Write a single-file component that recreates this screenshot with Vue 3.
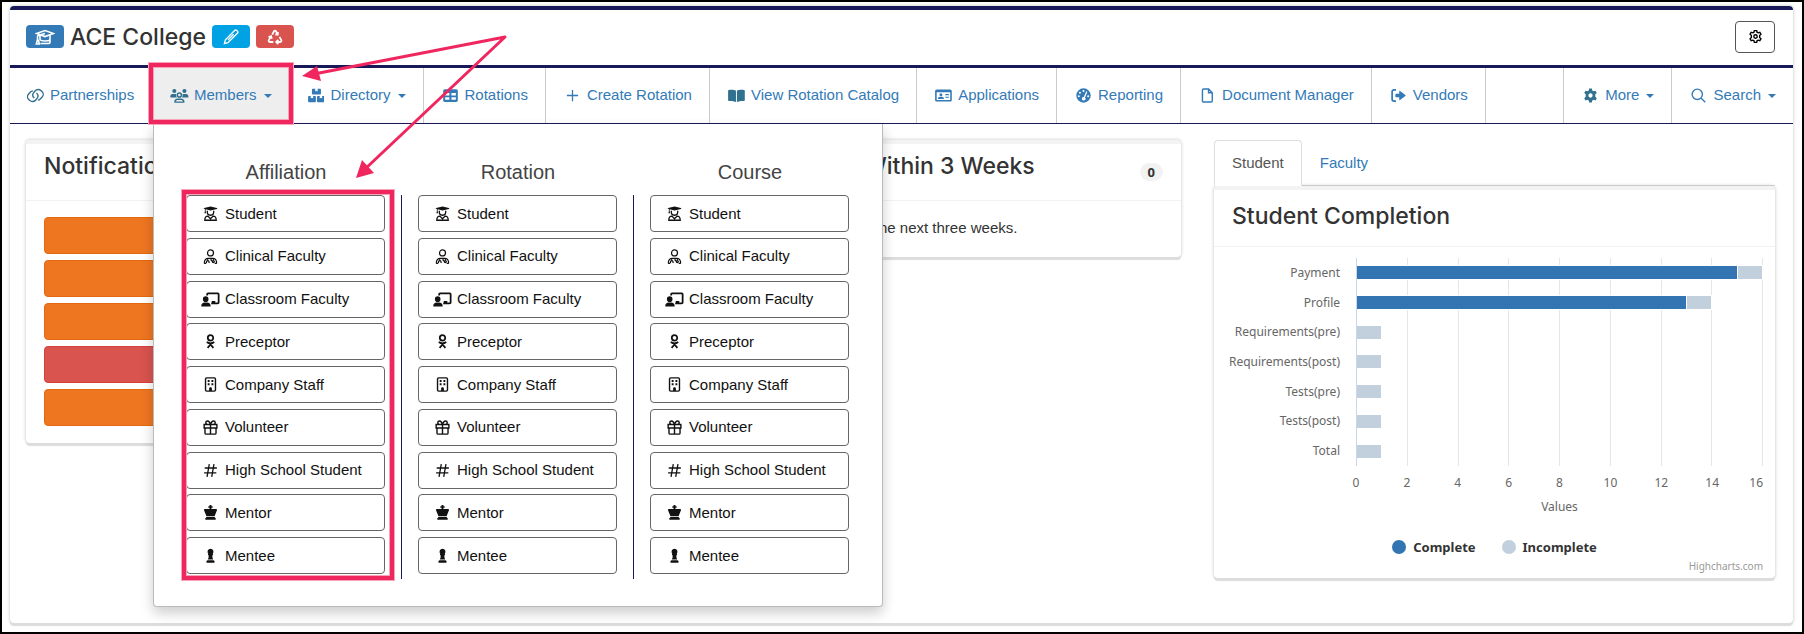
<script setup>
const navItems = [
  { label: 'Partnerships', icon: 'link', teal: true },
  { label: 'Members', icon: 'users', teal: true, caret: true, open: true },
  { label: 'Directory', icon: 'boxes', caret: true },
  { label: 'Rotations', icon: 'table' },
  { label: 'Create Rotation', icon: 'plus' },
  { label: 'View Rotation Catalog', icon: 'book', teal: true },
  { label: 'Applications', icon: 'idcard' },
  { label: 'Reporting', icon: 'gauge' },
  { label: 'Document Manager', icon: 'file' },
  { label: 'Vendors', icon: 'exit' }
]
const navRight = [
  { label: 'More', icon: 'gear', teal: true, caret: true },
  { label: 'Search', icon: 'search', caret: true }
]
const groups = ['Affiliation', 'Rotation', 'Course']
const roles = [
  { label: 'Student', icon: 'student' },
  { label: 'Clinical Faculty', icon: 'doctor' },
  { label: 'Classroom Faculty', icon: 'teacher' },
  { label: 'Preceptor', icon: 'person' },
  { label: 'Company Staff', icon: 'building' },
  { label: 'Volunteer', icon: 'gift' },
  { label: 'High School Student', icon: 'hash' },
  { label: 'Mentor', icon: 'king' },
  { label: 'Mentee', icon: 'pawn' }
]
const notices = ['warn', 'warn', 'warn', 'danger', 'warn']
const max = 16
const ticks = [0, 2, 4, 6, 8, 10, 12, 14, 16]
const rows = [
  { label: 'Payment', done: 15, open: 1 },
  { label: 'Profile', done: 13, open: 1 },
  { label: 'Requirements(pre)', done: 0, open: 1 },
  { label: 'Requirements(post)', done: 0, open: 1 },
  { label: 'Tests(pre)', done: 0, open: 1 },
  { label: 'Tests(post)', done: 0, open: 1 },
  { label: 'Total', done: 0, open: 1 }
]
const pct = (n) => ({ width: (n / max) * 100 + '%' })

const gearSolid =
  'M6.6 0.6h2.8l.5 2.1 1.3.8 2.1-.7 1.4 2.4-1.6 1.5v2.6l1.6 1.5-1.4 2.4-2.1-.7-1.3.8-.5 2.1H6.6l-.5-2.1-1.3-.8-2.1.7-1.4-2.4 1.6-1.5V6.7L1.3 5.2l1.4-2.4 2.1.7 1.3-.8z'

// s: stroked path, w: stroke width, f: filled path (even-odd), vb: view box width
const icons = {
  link: { vb: 20, w: 1.5, s: 'M8.900 10.600a3.600 3.600 0 0 1-.9-5.400l1.900-2.200a4.200 4.200 0 0 1 6.100-.2l1.100 1a4.200 4.200 0 0 1 .1 5.900l-2 2c-.7.7-1.600 1.100-2.600 1.200M11.100 5.400a3.600 3.600 0 0 1 .9 5.400L10.100 13a4.200 4.200 0 0 1-6.100.2l-1.100-1a4.200 4.200 0 0 1-.1-5.900l2-2c.7-.7 1.600-1.100 2.600-1.200' },
  users: { vb: 20, f: 'M4.600 1a2.200 2.200 0 1 1 0 4.400 2.200 2.200 0 0 1 0-4.400zM15.400 1a2.200 2.200 0 1 1 0 4.400 2.200 2.200 0 0 1 0-4.400zM2.800 6.400h2.600c.4 0 .8.1 1.100.3a4 4 0 0 0 .8 3.300H.7C.3 10 .3 9.700.3 9.300 .3 7.700 1.300 6.400 2.800 6.400zM14.600 6.400h2.600c1.500 0 2.500 1.300 2.500 2.900 0 .4 0 .7-.4.7h-6.600a4 4 0 0 0 .8-3.300c.3-.2.7-.3 1.100-.3zM10 4.400a3 3 0 1 1 0 6 3 3 0 0 1 0-6zm0 1.600a1.400 1.400 0 1 0 0 2.800A1.400 1.400 0 0 0 10 6zM8.300 11.300h3.400c2.300 0 3.800 1.600 3.800 3.700 0 .4-.2.7-.6.700H5.100c-.4 0-.6-.3-.6-.7 0-2.100 1.500-3.700 3.800-3.700zm0 1.400c-1.200 0-2 .7-2.300 1.600h8c-.3-.9-1.100-1.600-2.300-1.600z' },
  boxes: { vb: 18, f: 'M5 .8h2.700v2.800l1.300-.7 1.300.7V.8H13c.5 0 .8.3.8.8v4.600c0 .5-.3.8-.8.8H5c-.5 0-.8-.3-.8-.8V1.600c0-.5.300-.8.800-.8zM1 8.500h1.900v2.600l1.300-.7 1.300.7V8.500h2c.5 0 .9.300.9.800v5c0 .5-.4.900-.9.900H1c-.5 0-.900-.4-.900-.9v-5c0-.5.4-.8.9-.8zM10.500 8.500h2v2.600l1.300-.7 1.300.7V8.500H17c.5 0 .9.300.9.800v5c0 .5-.4.900-.9.900h-6.500c-.5 0-.9-.4-.9-.9v-5c0-.5.4-.8.9-.8z' },
  table: { f: 'M2 1.200h12c1 0 1.800.8 1.800 1.800v10c0 1-.8 1.800-1.800 1.800H2c-1 0-1.800-.8-1.800-1.800V3c0-1 .8-1.800 1.800-1.800zM2.300 5.400v2.500h4.500V5.400zM9 5.400v2.500h4.700V5.400zM2.300 9.900v2.600h4.500V9.900zM9 9.900v2.600h4.700V9.900z' },
  plus: { w: 1.4, s: 'M8 2v12M2 8h12' },
  book: { vb: 18, f: 'M8.500 3v12C6.500 13.900 3.500 13.600 1 13.800c-.5 0-.9-.3-.9-.8V2.800C.1 2.400.4 2 .9 2 3.800 1.600 6.900 1.900 8.500 3zM9.500 3c1.600-1.100 4.700-1.400 7.600-1 .5 0 .8.400.8.800V13c0 .5-.4.800-.9.800-2.500-.2-5.500.1-7.500 1.200z' },
  idcard: { vb: 18, f: 'M2 1.500h14c1.100 0 1.900.8 1.900 1.800v9.400c0 1-.8 1.800-1.900 1.800H2c-1.100 0-1.900-.8-1.900-1.800V3.300c0-1 .8-1.800 1.900-1.800zM1.800 4.600v8.200h14.400V4.600zM6.300 5.600a1.600 1.600 0 1 1 0 3.200 1.600 1.600 0 0 1 0-3.200zM5.400 9.400h1.800c1.400 0 2.300.9 2.300 2.300H3.100c0-1.400.9-2.300 2.300-2.300zM11 6.500h3.800v1.200H11zM11 9.300h3.800v1.200H11z' },
  gauge: { f: 'M8 .3a7.700 7.700 0 1 1 0 15.400A7.700 7.700 0 0 1 8 .3zM8 2.100a1.100 1.100 0 1 0 0 2.200 1.100 1.100 0 0 0 0-2.200zM4.200 3.900a1.100 1.100 0 1 0 0 2.200 1.100 1.100 0 0 0 0-2.200zM3 7.600a1.100 1.100 0 1 0 0 2.200 1.100 1.100 0 0 0 0-2.200zM13 7.600a1.100 1.100 0 1 0 0 2.200 1.100 1.100 0 0 0 0-2.200zM10.600 4.200 8.300 9.500a1.900 1.900 0 1 0 1.300.6l2.300-5.300c.3-.9-.9-1.400-1.300-.6z' },
  file: { w: 1.5, s: 'M3.900 1.100h5.300l3.900 3.900v8.600c0 .8-.5 1.300-1.300 1.300H3.900c-.8 0-1.300-.5-1.300-1.300V2.400c0-.8.500-1.300 1.300-1.300zM9.100 1.300V5h3.800' },
  exit: { w: 1.8, s: 'M5.300 2H3.200C2 2 1.200 2.800 1.200 4v8c0 1.200.8 2 2 2h2.100', f: 'M9.600 3.200 15.300 7.400c.4.300.4.900 0 1.200L9.600 12.900c-.4.200-.8 0-.8-.5V9.900H5.500c-.5 0-.8-.3-.8-.8V7c0-.5.3-.8.800-.8h3.300V3.600c0-.5.400-.7.800-.4z' },
  gear: { f: gearSolid + 'M8 5.700a2.300 2.300 0 1 0 0 4.600 2.300 2.300 0 0 0 0-4.600z' },
  search: { w: 1.5, s: 'M6.700 1.200a5.500 5.500 0 1 1 0 11 5.500 5.500 0 0 1 0-11zM10.700 10.700l4.500 4.500' },
  cog: { w: 1.700, s: gearSolid + 'M8 5.900a2.100 2.100 0 1 0 0 4.200 2.100 2.100 0 0 0 0-4.200z' },
  cap: { vb: 20, w: 1.6, s: 'M1.500 4.500 10 1.500l8.500 3L10 7.600zM5 6.200V10c0 1 2 2 5 2s5-1 5-2V6.200M10 4.600l-6.800 1.900c-.6.300-.7.800-.7 1.500v2.800l-1.200 4.200h3l-1-4.200M5.500 14.500h8.500c1 0 1-.8 1-1.500v-3' },
  pencil: { w: 1.3, s: 'M11.600 1.500c.7-.7 1.500-.7 2.200 0l.6.600c.7.700.7 1.500 0 2.200L5 13.600l-3.600 1 1-3.700zM10.600 5.300 5 11' },
  recycle: { w: 1.800, s: 'M5.200 5.600 7 2.300c.4-.8 1.600-.8 2 0l1.500 2.600M8.200 5.300l2.500.4.500-2.600M12.500 7.900l1.800 3.200c.4.900-.1 1.900-1.200 1.900H9.600M11.300 10.800 9.200 13l2.100 2.200M6.300 13H2.900c-1 0-1.600-1-1.100-1.900l2.100-3.500M1.500 8l2.600-.8.700 2.600' },
  student: { w: 1.400, s: 'M4.600 5v1.500a3.400 3.400 0 0 0 6.800 0V5M1.900 15.200c0-2.600 1.200-4.400 3.300-4.400L8 13.600l2.800-2.800c2.100 0 3.300 1.800 3.300 4.400zM8 13v2', f: 'M8 .4 14.800 2c.6.200.6.900 0 1.100L8 4.700 2.800 3.500v2l.6 2.300H1.500L2 5.400V3.200L1.200 3c-.6-.2-.6-.8 0-1z' },
  doctor: { w: 1.300, s: 'M8 1a3.200 3.200 0 1 1 0 6.400A3.200 3.200 0 0 1 8 1zM1.400 15.300c0-3.300 1.700-5.300 4.300-5.300h4.600c2.600 0 4.300 2 4.300 5.300M5 10.200v2.300M3.700 15v-1c0-1 .6-1.500 1.400-1.500s1.400.5 1.400 1.500v1M11 10.200v2M8.300 10l.7 3M11 12.300a1.100 1.100 0 1 1 0 2.200 1.100 1.100 0 0 1 0-2.200M1.200 15.300h2.300M12.500 15.300h2.200' },
  teacher: { vb: 20, w: 1.900, s: 'M6.600 3.600V2.400c0-.5.3-.9.9-.9h10.400c.6 0 .9.400.9.900v8.800c0 .5-.3.900-.9.900h-7', f: 'M5 4.600a3 3 0 1 1 0 6 3 3 0 0 1 0-6zM4 11.300h2.600c2.200 0 3.700 1.500 3.700 3.600 0 .4-.3.600-.6.600H.9c-.4 0-.6-.2-.6-.6 0-2.100 1.500-3.600 3.700-3.600zM11.500 9.700h3.700v2.400h-3.700z' },
  person: { w: 1.900, s: 'M8 1.200a2.900 2.900 0 1 1 0 5.800 2.900 2.900 0 0 1 0-5.800zM4 8.500c2.400 1.700 5.600 1.700 8 0M4.900 14.800 8 11.200l3.100 3.600M8 10v1.500' },
  building: { w: 1.500, s: 'M4 .9h8c.8 0 1.300.5 1.300 1.200v11.800c0 .7-.5 1.200-1.300 1.200H4c-.8 0-1.300-.5-1.300-1.200V2.100c0-.7.5-1.200 1.300-1.200z', f: 'M5 3.200h2v2H5zM9 3.200h2v2H9zM5 6.700h2v2H5zM9 6.700h2v2H9zM6.500 15v-2.500c0-2 3-2 3 0V15z' },
  gift: { w: 1.500, s: 'M1.200 4.800h13.600v3.700H1.200zM2.100 8.500v5.300c0 .7.500 1.300 1.300 1.300h9.200c.8 0 1.300-.6 1.300-1.300V8.500M8 4.800v10M8 4.600C7.300 2.400 6.300 1 4.900 1c-2.500 0-2.700 3.600 0 3.700M8 4.600C8.700 2.400 9.700 1 11.100 1c2.500 0 2.700 3.600 0 3.700' },
  hash: { w: 1.400, s: 'M6.700 1.200 4.300 14.800M11.700 1.200 9.300 14.800M1.800 5.300h13M1.200 10.500h13' },
  king: { f: 'M7 0h2v1.200h1.300V3H9v1.200h5c.8 0 1.200.7.9 1.400L12.300 12H3.700L1.100 5.600C.8 4.900 1.200 4.200 2 4.200h5V3H5.700V1.200H7zM3.700 12.700h8.600l1.300 1.700c.4.600 0 1.300-.7 1.300H3.100c-.7 0-1.100-.7-.7-1.300z' },
  pawn: { f: 'M8 .8a3.200 3.200 0 0 1 2.300 5.400h.4v1.500h-.8c0 1.700.2 3.100.9 4.600H5.200c.7-1.500.9-2.900.9-4.600h-.8V6.200h.4A3.200 3.200 0 0 1 8 .8zM4.600 13h6.800l1 1.400c.3.600 0 1.200-.7 1.200H4.300c-.7 0-1-.6-.7-1.200z' }
}
const Icon = (props) => {
  const i = icons[props.name]
  return h('svg', { class: 'icon', viewBox: `0 0 ${i.vb || 16} 16`, 'aria-hidden': 'true' }, [
    i.f && h('path', { d: i.f, fill: 'currentColor', 'fill-rule': 'evenodd' }),
    i.s && h('path', { d: i.s, fill: 'none', stroke: 'currentColor', 'stroke-width': i.w })
  ])
}
Icon.props = ['name']
</script>

<script>
import { h } from 'vue'
</script>

<template>
  <div class="page">
    <main class="panel">
      <header class="head">
        <span class="badge blue"><Icon name="cap" /></span>
        <h1>ACE College</h1>
        <button class="badge sky" aria-label="Edit"><Icon name="pencil" /></button>
        <button class="badge red" aria-label="Recycle"><Icon name="recycle" /></button>
        <button class="settings" aria-label="Settings"><Icon name="cog" /></button>
      </header>

      <nav class="nav">
        <ul class="left">
          <li v-for="n in navItems" :key="n.label" :class="{ open: n.open }">
            <a href="#" :class="{ teal: n.teal }">
              <span class="ico"><Icon :name="n.icon" /></span>{{ n.label }}<i v-if="n.caret" class="caret"></i>
            </a>
            <div v-if="n.open" class="menu">
              <section v-for="g in groups" :key="g">
                <h2>{{ g }}</h2>
                <div class="roles">
                  <button v-for="r in roles" :key="r.label">
                    <span class="ico"><Icon :name="r.icon" /></span>{{ r.label }}
                  </button>
                </div>
              </section>
            </div>
          </li>
        </ul>
        <ul class="right">
          <li v-for="n in navRight" :key="n.label">
            <a href="#" :class="{ teal: n.teal }">
              <span class="ico"><Icon :name="n.icon" /></span>{{ n.label }}<i class="caret"></i>
            </a>
          </li>
        </ul>
      </nav>

      <div class="columns">
        <section class="card">
          <div class="card-head"><h3>Notifications</h3></div>
          <div class="notices">
            <button v-for="(n, i) in notices" :key="i" :class="n" :aria-label="'Notification ' + (i + 1)"></button>
          </div>
        </section>

        <section class="card">
          <div class="card-head">
            <h3>Rotations Beginning Within 3 Weeks</h3>
            <span class="count">0</span>
          </div>
          <p>There are no rotations beginning in the next three weeks.</p>
        </section>

        <div class="stats">
          <div class="tabs" role="tablist">
            <a href="#" class="tab active" role="tab">Student</a>
            <a href="#" class="tab" role="tab">Faculty</a>
          </div>
          <section class="card">
            <div class="card-head"><h3>Student Completion</h3></div>
            <div class="chart">
              <div class="labels">
                <span v-for="r in rows" :key="r.label">{{ r.label }}</span>
              </div>
              <div class="plot">
                <div class="grid"><i v-for="n in 8" :key="n"></i></div>
                <div class="bars">
                  <div v-for="r in rows" :key="r.label" class="row">
                    <b v-if="r.done" class="done" :style="pct(r.done)"></b>
                    <b class="todo" :style="pct(r.open)"></b>
                  </div>
                </div>
              </div>
              <div class="ticks"><span v-for="t in ticks" :key="t">{{ t }}</span></div>
              <div class="axis">Values</div>
            </div>
            <div class="legend">
              <span><i class="done"></i>Complete</span>
              <span><i class="todo"></i>Incomplete</span>
            </div>
            <a href="#" class="credit">Highcharts.com</a>
          </section>
        </div>
      </div>
    </main>

    <svg class="marks" width="600" height="600" viewBox="0 0 600 600" aria-hidden="true">
      <g fill="none" stroke="#f7a3ba" stroke-width="6">
        <rect x="151" y="65" width="140" height="57" />
        <rect x="184" y="192" width="208" height="386" />
      </g>
      <g fill="none" stroke="#f0265f" stroke-width="4">
        <rect x="151" y="65" width="140" height="57" />
        <rect x="184" y="192" width="208" height="386" />
      </g>
      <path d="M314 74 505 37 364 170" fill="none" stroke="#f0265f" stroke-width="3" stroke-linejoin="round" />
      <path d="M302 76 317 66 321 81zM356 178 362 160 374 173z" fill="#f0265f" />
    </svg>
  </div>
</template>

<style>
body {
  margin: 0;
}
</style>

<style scoped>
* {
  box-sizing: border-box;
}
.page {
  position: relative;
  display: flex;
  min-height: 100vh;
  border: 2px solid #000;
  background: #fff;
  color: #333;
  font: 15px/22px "Liberation Sans", Arial, sans-serif;
}
h1, h2, h3, p, ul {
  margin: 0;
  padding: 0;
  font-weight: 400;
}
ul {
  display: flex;
  list-style: none;
}
a {
  color: #337ab7;
  text-decoration: none;
}
button {
  margin: 0;
  font: inherit;
  cursor: pointer;
}
:deep(.icon) {
  display: block;
  height: 16px;
}
.panel {
  flex: 1;
  min-width: 0;
  margin: 4px 9px 9px 8px;
  border-top: 4px solid #191959;
  border-radius: 4px;
  box-shadow: 0 3px 1px #dcdcdc, 0 0 3px 1px rgba(0, 0, 0, 0.14);
}
.head {
  display: flex;
  align-items: center;
  gap: 6px;
  height: 58px;
  padding: 0 18px 2px 16px;
  border-bottom: 3px solid #191959;
}
h1, h3 {
  font-family: Inter, "Open Sans", sans-serif;
  font-weight: 500;
  font-size: 23px;
  line-height: 32px;
  white-space: nowrap;
}
.badge {
  display: flex;
  align-items: center;
  justify-content: center;
  width: 38px;
  height: 23px;
  padding: 0;
  border: 0;
  border-radius: 4px;
  color: #fff;
}
.blue { background: #337ab7; }
.sky { background: #00a2e4; }
.red { background: #d9534f; }
.settings {
  display: flex;
  align-items: center;
  justify-content: center;
  width: 40px;
  height: 32px;
  margin-left: auto;
  border: 1px solid #555;
  border-radius: 4px;
  background: #fff;
  color: #000;
}
.settings :deep(.icon) {
  height: 13px;
}
.nav {
  display: flex;
  justify-content: space-between;
  height: 56px;
  border-bottom: 1px solid #191959;
}
.nav li {
  position: relative;
  border-right: 1px solid #ccc;
}
.nav .right li {
  border-right: 0;
  border-left: 1px solid #ccc;
}
.nav li > a {
  display: flex;
  align-items: center;
  height: 54px;
  padding: 0 17px;
  white-space: nowrap;
}
.nav .left li:first-child {
  min-width: 143px;
}
.nav .left li:first-child > a {
  padding: 0 16px;
}
.nav .open {
  background: #eee;
}
.ico {
  display: flex;
  justify-content: center;
  width: 19px;
  margin-right: 5px;
}
.nav .ico :deep(.icon) {
  flex: none;
  height: 15px;
}
.teal .ico {
  color: #31708f;
}
.caret {
  margin: 2px 0 0 7px;
  border: 4px solid transparent;
  border-top-color: currentColor;
  border-bottom: 0;
}
.menu {
  position: absolute;
  z-index: 2;
  top: calc(100% + 1px);
  left: 0;
  display: flex;
  padding: 27px 16px;
  border: 1px solid #bbb;
  border-top: 0;
  border-radius: 0 0 4px 4px;
  background: #fff;
  box-shadow: 0 6px 13px rgba(0, 0, 0, 0.2);
}
.menu section {
  width: 232px;
}
.menu h2 {
  height: 44px;
  color: #444;
  font-size: 20px;
  line-height: 42px;
  text-align: center;
}
.roles {
  display: flex;
  flex-direction: column;
  justify-content: space-between;
  height: 384px;
  padding: 0 16px 5px;
  border-right: 1px solid #191959;
}
.menu section:last-child .roles {
  border-right-color: transparent;
}
.roles button {
  display: flex;
  align-items: center;
  height: 37px;
  padding: 0 14px;
  border: 1px solid #666;
  border-radius: 4px;
  background: #fff;
  color: #111;
  white-space: nowrap;
}
.columns {
  display: grid;
  grid-template-columns: repeat(3, minmax(0, 1fr));
  align-items: start;
  gap: 33px;
  padding: 16px 18px 41px 16px;
}
.card {
  border-top: 4px solid #f3f3f3;
  border-radius: 4px;
  background: #fff;
  box-shadow: 0 3px 1px #dcdcdc, 0 0 3px 1px rgba(0, 0, 0, 0.14);
}
.card-head {
  display: flex;
  justify-content: space-between;
  height: 57px;
  padding: 6px 18px 0;
  border-bottom: 1px solid #f2f2f2;
}
.stats .card-head {
  padding-top: 10px;
}
.count {
  align-self: flex-start;
  margin-top: 13px;
  padding: 0 8px;
  border-radius: 9px;
  background: #f2f2f2;
  font: 700 13px/18px "Noto Sans", sans-serif;
}
.card p {
  padding: 16px 18px 18px;
}
.notices {
  display: flex;
  flex-direction: column;
  gap: 6px;
  padding: 16px 18px 17px;
}
.notices button {
  height: 37px;
  border: 1px solid #e2690f;
  border-radius: 4px;
  background: #ef7621;
}
.notices .danger {
  border-color: #d43f3a;
  background: #d9534f;
}
.tabs {
  display: flex;
  height: 46px;
  border-bottom: 1px solid #ddd;
}
.tab {
  height: 46px;
  padding: 0 17px;
  border: 1px solid transparent;
  border-radius: 4px 4px 0 0;
  line-height: 44px;
}
.tab.active {
  border-color: #ddd #ddd #fff;
  background: #fff;
  color: #555;
}
.chart {
  display: grid;
  grid-template-columns: 142px 1fr;
  padding: 11px 12px 0 0;
  color: #666;
  font: 12px/20px "Noto Sans", sans-serif;
}
.labels, .bars {
  display: grid;
  grid-template-rows: repeat(7, 1fr);
  align-items: center;
  height: 208px;
}
.labels {
  padding-right: 16px;
  text-align: right;
}
.plot, .grid {
  display: grid;
}
.grid, .bars {
  grid-area: 1 / 1;
}
.grid {
  grid-template-columns: repeat(8, 1fr);
  border-left: 1px solid #ccd6eb;
}
.grid i {
  border-right: 1px solid #e6e6e6;
}
.row {
  display: flex;
  padding-left: 1px;
}
.row b {
  height: 15px;
  border: 1px solid #fff;
  border-left: 0;
}
.done { background: #3375b2; }
.todo { background: #c2cfdd; }
.ticks {
  grid-column: 2;
  display: flex;
  justify-content: space-between;
  padding-top: 7px;
}
.ticks span {
  display: flex;
  justify-content: center;
  width: 0;
}
.ticks span:last-child {
  justify-content: flex-end;
}
.axis {
  grid-column: 2;
  padding-top: 4px;
  text-align: center;
}
.legend {
  display: flex;
  justify-content: center;
  gap: 26px;
  margin-top: 20px;
  font: 700 13px/20px "Noto Sans", sans-serif;
}
.legend span {
  display: flex;
  align-items: center;
}
.legend i {
  width: 14px;
  height: 14px;
  margin-right: 7px;
  border-radius: 50%;
}
.credit {
  display: block;
  margin-right: 12px;
  padding-bottom: 3px;
  color: #999;
  font: 10px/18px "Noto Sans", sans-serif;
  text-align: right;
}
.marks {
  position: absolute;
  z-index: 3;
  top: -2px;
  left: -2px;
  pointer-events: none;
}
</style>
